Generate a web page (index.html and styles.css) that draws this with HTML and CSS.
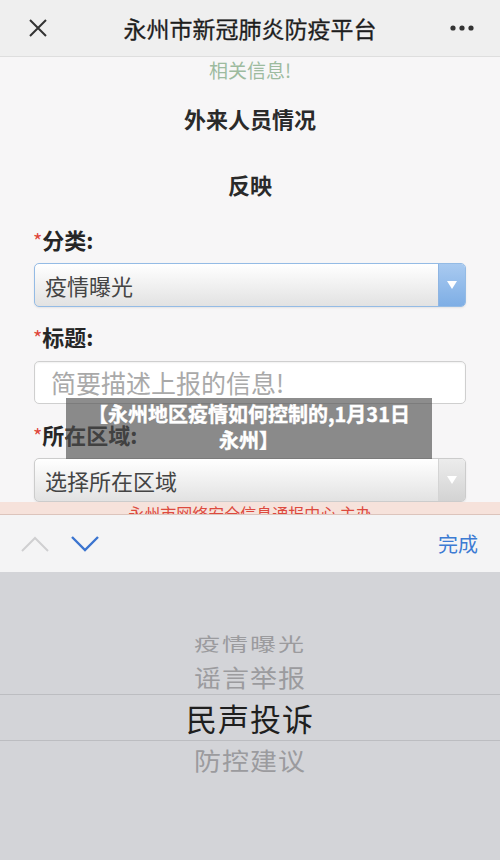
FILE: index.html
```html
<!DOCTYPE html>
<html lang="zh-CN">
<head>
  <meta charset="UTF-8">
  <meta name="viewport" content="width=device-width, initial-scale=1">
  <title>永州市新冠肺炎防疫平台</title>
  <link rel="stylesheet" href="styles.css">
</head>
<body>
  <div class="screen">
    <!-- 顶部导航 -->
    <header class="topbar">
      <svg class="icon-close" width="20" height="20" viewBox="0 0 20 20">
        <path d="M2 2 L18 18 M18 2 L2 18" stroke="#333" stroke-width="2" fill="none"/>
      </svg>
      <div class="topbar-title">永州市新冠肺炎防疫平台</div>
      <svg class="icon-more" width="24" height="8" viewBox="0 0 24 8">
        <circle cx="3" cy="4" r="2.6" fill="#333"/>
        <circle cx="12" cy="4" r="2.6" fill="#333"/>
        <circle cx="21" cy="4" r="2.6" fill="#333"/>
      </svg>
    </header>

    <!-- 表单 -->
    <main class="form">
      <p class="notice">相关信息!</p>
      <h2 class="section-title first">外来人员情况</h2>
      <h2 class="section-title">反映</h2>

      <div class="field-label label-first"><span class="req">*</span>分类:</div>
      <div class="select active">
        <span class="select-text">疫情曝光</span>
        <span class="select-arrow"></span>
      </div>

      <div class="field-label"><span class="req">*</span>标题:</div>
      <div class="text-input">
        <span class="placeholder">简要描述上报的信息!</span>
      </div>

      <div class="field-label label-last"><span class="req">*</span>所在区域:</div>
      <div class="select">
        <span class="select-text">选择所在区域</span>
        <span class="select-arrow"></span>
      </div>
    </main>

    <div class="footer-band">
      <span>永州市网络安全信息通报中心 主办</span>
    </div>

    <!-- 键盘工具栏 -->
    <div class="toolbar">
      <div class="toolbar-arrows">
        <svg width="28" height="16" viewBox="0 0 28 16">
          <path d="M1 15 L14 2 L27 15" stroke="#cfcfd1" stroke-width="2" fill="none"/>
        </svg>
        <svg width="28" height="16" viewBox="0 0 28 16">
          <path d="M1 1 L14 14 L27 1" stroke="#3b74cf" stroke-width="2.4" fill="none"/>
        </svg>
      </div>
      <div class="toolbar-done">完成</div>
    </div>

    <!-- 选择器 -->
    <div class="picker">
      <div class="picker-item far">疫情曝光</div>
      <div class="picker-item near">谣言举报</div>
      <div class="picker-item selected">民声投诉</div>
      <div class="picker-item near last">防控建议</div>
    </div>

    <div class="caption">【永州地区疫情如何控制的,1月31日<br>永州】</div>
  </div>
</body>
</html>
```

FILE: styles.css
```css
* {
  box-sizing: border-box;
}

body {
  margin: 0;
  font-family: "Noto Sans CJK SC", "Noto Sans", sans-serif;
  background-color: #d3d4d8;
}

.screen {
  position: relative;
  width: 500px;
  height: 860px;
  overflow: hidden;
}

.topbar {
  height: 57px;
  background-color: #efefef;
  border-bottom: 1px solid #dedede;
  display: flex;
  align-items: center;
  padding: 0 26px 0 28px;
}

.icon-close {
  flex: none;
}

.topbar-title {
  flex: 1;
  text-align: center;
  font-size: 23px;
  color: #1e1e1e;
  padding-left: 2px;
  -webkit-text-stroke: 0.3px #1e1e1e;
}

.icon-more {
  flex: none;
}

.form {
  height: 445px;
  background-color: #f7f6f7;
  padding: 1px 34px 0 34px;
  overflow: hidden;
}

.notice {
  margin: 0;
  text-align: center;
  font-size: 19px;
  line-height: 24px;
  color: #9dbb9f;
}

.section-title {
  margin: 36px 0 0 0;
  text-align: center;
  font-size: 22px;
  line-height: 30px;
  font-weight: bold;
  color: #2a2a2a;
}

.section-title.first {
  margin-top: 21px;
}

.field-label {
  margin: 14px 0 8px -1px;
  font-size: 22px;
  line-height: 30px;
  font-weight: bold;
  color: #262626;
}

.field-label.label-first {
  margin-top: 25px;
  margin-bottom: 7px;
}

.field-label.label-last {
  margin-top: 15px;
  margin-bottom: 7px;
}

.req {
  color: #e0473c;
  font-weight: normal;
  font-size: 20px;
}

.select {
  height: 44px;
  display: flex;
  border: 1px solid #cccccc;
  border-radius: 5px;
  background: linear-gradient(#ffffff, #e2e2e2);
  box-shadow: 0 1px 2px rgba(0, 0, 0, 0.08);
  overflow: hidden;
}

.select.active {
  border-color: #94bbe5;
}

.select-text {
  flex: 1;
  padding-left: 10px;
  font-size: 22px;
  line-height: 42px;
  color: #444;
}

.select-arrow {
  width: 27px;
  border-left: 1px solid #d4d4d4;
  background: linear-gradient(#ececec, #d3d3d3);
  display: flex;
  align-items: center;
  justify-content: center;
}

.select-arrow::after {
  content: "";
  border-left: 5px solid transparent;
  border-right: 5px solid transparent;
  border-top: 8px solid #ffffff;
}

.select.active .select-arrow {
  border-left-color: #8fb5e2;
  background: linear-gradient(#a9caf0, #7eaee5);
}

.text-input {
  height: 43px;
  border: 1px solid #cfcfcf;
  border-radius: 5px;
  background-color: #ffffff;
  box-shadow: inset 0 1px 2px rgba(0, 0, 0, 0.06);
  padding-left: 16px;
}

.placeholder {
  font-size: 25px;
  line-height: 41px;
  color: #a9a9a9;
}

.footer-band {
  height: 13px;
  background-color: #f6e2db;
  border-bottom: 1px solid #dcc4bc;
  text-align: center;
  overflow: hidden;
}

.footer-band span {
  display: block;
  padding-top: 1px;
  font-size: 16px;
  line-height: 20px;
  color: #dd4a3e;
}

.toolbar {
  height: 57px;
  background-color: #f4f4f5;
  display: flex;
  align-items: center;
  justify-content: space-between;
  padding: 0 22px 0 21px;
}

.toolbar-arrows {
  display: flex;
  gap: 22px;
  align-items: center;
}

.toolbar-done {
  font-size: 20px;
  color: #3c7bd3;
}

.picker {
  height: 288px;
  background-color: #d3d4d8;
  padding-top: 53px;
  display: flex;
  flex-direction: column;
  align-items: center;
}

.picker-item {
  width: 100%;
  display: flex;
  align-items: center;
  justify-content: center;
  color: #9b9b9e;
  letter-spacing: 1px;
}

.picker-item.far {
  height: 34px;
  font-size: 26px;
  letter-spacing: 2px;
  transform: scaleY(0.72);
}

.picker-item.near {
  height: 35px;
  font-size: 27px;
  transform: scaleY(0.9);
}

.picker-item.last {
  height: 37px;
}

.picker-item.selected {
  height: 47px;
  font-size: 31px;
  color: #1f1f1f;
  border-top: 1px solid #bcbdc1;
  border-bottom: 1px solid #bcbdc1;
}

.caption {
  position: absolute;
  left: 66px;
  top: 398px;
  width: 366px;
  padding: 3px 8px 6px 8px;
  background-color: rgba(80, 80, 80, 0.65);
  color: #ffffff;
  font-size: 20px;
  font-weight: bold;
  line-height: 26px;
  text-align: center;
  -webkit-text-stroke: 0.4px #ffffff;
}
```
